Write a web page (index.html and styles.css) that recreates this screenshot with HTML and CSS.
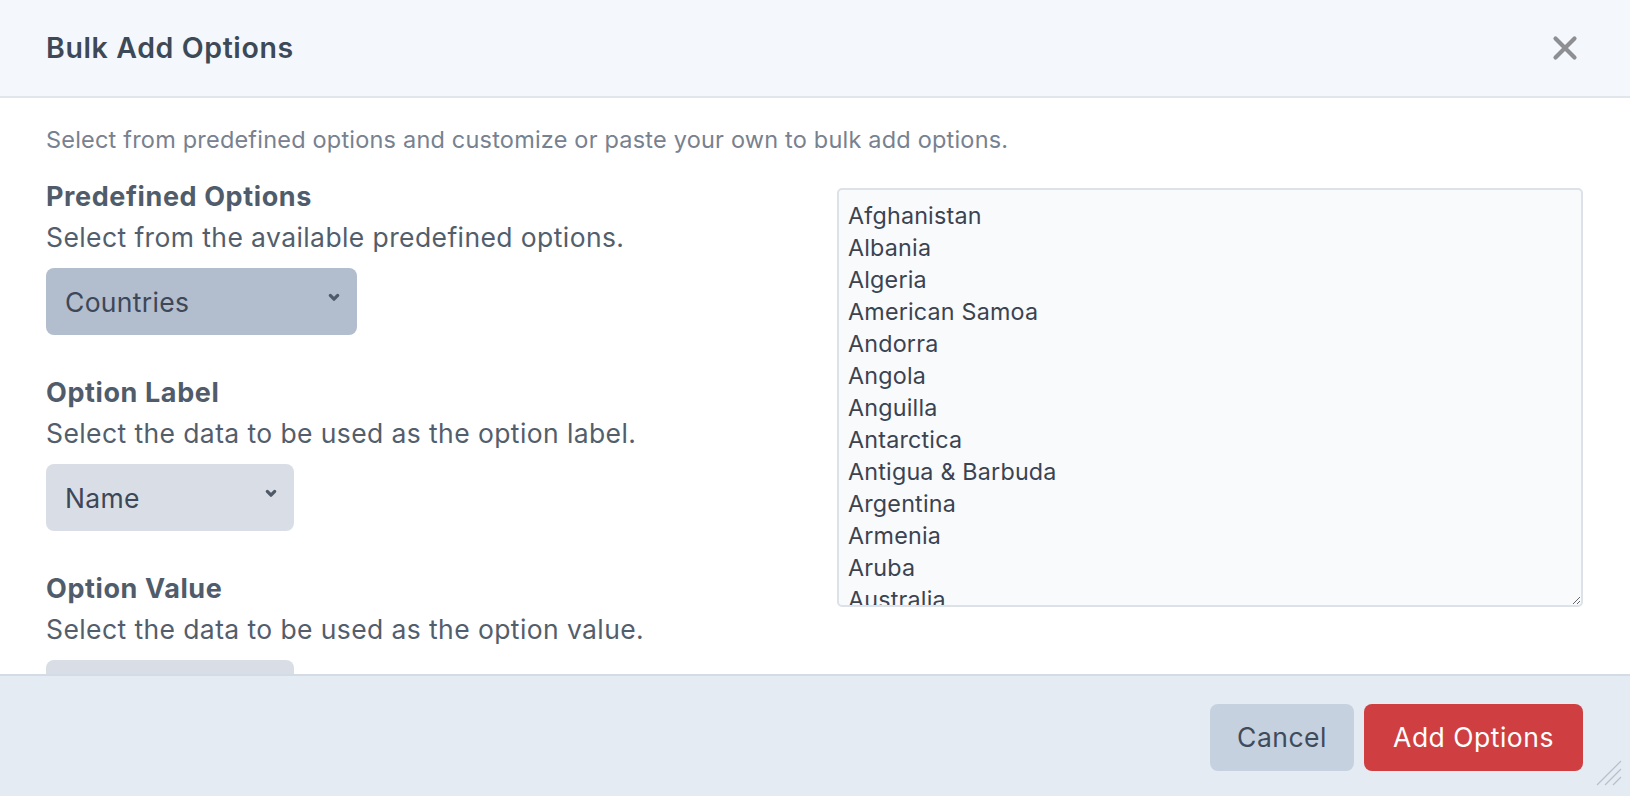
FILE: index.html
```html
<!DOCTYPE html>
<html lang="en">
<head>
<meta charset="utf-8">
<title>Bulk Add Options</title>
<link rel="stylesheet" href="styles.css">
</head>
<body>
<div class="modal">
  <header class="modal-header">
    <h2 class="modal-title">Bulk Add Options</h2>
    <button class="close-btn" type="button" aria-label="Close">
      <svg width="26" height="26" viewBox="0 0 26 26"><path d="M3.5 3.5 L22.5 22.5 M22.5 3.5 L3.5 22.5" stroke="currentColor" stroke-width="4.2" stroke-linecap="round" fill="none"/></svg>
    </button>
  </header>

  <div class="modal-body">
    <p class="intro">Select from predefined options and customize or paste your own to bulk add options.</p>
    <div class="columns">
      <div class="fields">
        <div class="field">
          <label class="field-label">Predefined Options</label>
          <p class="field-help">Select from the available predefined options.</p>
          <div class="select-wrap select-wide">
            <select class="select select-active"><option>Countries</option></select>
            <svg class="chevron" width="12" height="9" viewBox="0 0 12 9"><path d="M2.3 2.4 L6 6.2 L9.7 2.4" stroke="currentColor" stroke-width="3.2" stroke-linecap="round" stroke-linejoin="round" fill="none"/></svg>
          </div>
        </div>
        <div class="field">
          <label class="field-label">Option Label</label>
          <p class="field-help">Select the data to be used as the option label.</p>
          <div class="select-wrap">
            <select class="select"><option>Name</option></select>
            <svg class="chevron" width="12" height="9" viewBox="0 0 12 9"><path d="M2.3 2.4 L6 6.2 L9.7 2.4" stroke="currentColor" stroke-width="3.2" stroke-linecap="round" stroke-linejoin="round" fill="none"/></svg>
          </div>
        </div>
        <div class="field">
          <label class="field-label">Option Value</label>
          <p class="field-help">Select the data to be used as the option value.</p>
          <div class="select-wrap">
            <select class="select"><option>Name</option></select>
            <svg class="chevron" width="12" height="9" viewBox="0 0 12 9"><path d="M2.3 2.4 L6 6.2 L9.7 2.4" stroke="currentColor" stroke-width="3.2" stroke-linecap="round" stroke-linejoin="round" fill="none"/></svg>
          </div>
        </div>
      </div>
      <div class="preview">
        <textarea class="options-text" spellcheck="false">Afghanistan
Albania
Algeria
American Samoa
Andorra
Angola
Anguilla
Antarctica
Antigua &amp; Barbuda
Argentina
Armenia
Aruba
Australia
Austria
Azerbaijan
Bahamas
Bahrain
Bangladesh
Barbados
Belarus
Belgium
Belize
Benin
Bermuda
Bhutan
Bolivia</textarea>
      </div>
    </div>
  </div>

  <footer class="modal-footer">
    <button class="btn btn-cancel" type="button">Cancel</button>
    <button class="btn btn-primary" type="button">Add Options</button>
    <svg class="grip" width="26" height="26" viewBox="0 0 26 26"><path d="M1 25 L25 1 M9 25 L25 9 M17 25 L25 17" stroke="#b9c0ca" stroke-width="1.3" fill="none"/></svg>
  </footer>
</div>
</body>
</html>
```
FILE: styles.css
```css
* { box-sizing: border-box; }

html, body {
  margin: 0;
  height: 100%;
}

body {
  font-family: Inter, "Noto Sans", "Liberation Sans", sans-serif;
  color: #4a5568;
  background: #ffffff;
  overflow: hidden;
}

.modal {
  position: relative;
  display: flex;
  flex-direction: column;
  height: 796px;
  background: #ffffff;
}

/* Header */
.modal-header {
  flex: 0 0 auto;
  height: 98px;
  display: flex;
  align-items: center;
  justify-content: space-between;
  padding: 0 52px 0 46px;
  background: #f4f7fb;
  border-bottom: 2px solid #e1e6ed;
}

.modal-title {
  margin: 0;
  font-size: 28.5px;
  font-weight: 600;
  letter-spacing: 0.62px;
  color: #3e4958;
  line-height: 36px;
}

.close-btn {
  border: 0;
  padding: 0;
  background: transparent;
  color: #8d8f93;
  width: 26px;
  height: 26px;
  display: flex;
}

/* Body */
.modal-body {
  flex: 1 1 auto;
  overflow: hidden;
  padding: 24px 47px 0 46px;
}

.intro {
  margin: 0;
  font-size: 23.5px;
  line-height: 36px;
  letter-spacing: 0.2px;
  color: #77818f;
}

.columns {
  margin-top: 19px;
  display: grid;
  grid-template-columns: 1fr 1fr;
  column-gap: 45px;
}

.fields {
  display: flex;
  flex-direction: column;
  gap: 38px;
}

.field {
  display: flex;
  flex-direction: column;
}

.field-label {
  font-size: 27px;
  font-weight: 700;
  letter-spacing: 0.6px;
  line-height: 40px;
  color: #515c6b;
}

.field-help {
  margin: 0;
  font-size: 26.5px;
  letter-spacing: 0.4px;
  line-height: 40px;
  color: #535e6c;
}

.select-wrap {
  position: relative;
  margin-top: 11px;
  width: 248px;
  height: 67px;
}

.select-wide {
  width: 311px;
}

.select {
  appearance: none;
  -webkit-appearance: none;
  width: 100%;
  height: 100%;
  border: 0;
  border-radius: 8px;
  padding: 0 40px 0 19px;
  background: #d9dee6;
  color: #3d4757;
  font-family: inherit;
  font-size: 26.5px;
  letter-spacing: 0.3px;
  outline: none;
}

.select-active {
  background: #b2bdcd;
}

.chevron {
  position: absolute;
  right: 17px;
  top: 25px;
  color: #4f5968;
  pointer-events: none;
}

/* Preview textarea */
.preview {
  padding-top: 11px;
}

.options-text {
  display: block;
  width: 100%;
  height: 419px;
  margin: 0;
  padding: 10px 9px;
  border: 2px solid #dde1e8;
  border-radius: 5px;
  background: #f9fafc;
  color: #3b4351;
  font-family: inherit;
  font-size: 23.3px;
  letter-spacing: 0.2px;
  line-height: 32px;
  resize: both;
  overflow: hidden;
  outline: none;
}

/* Footer */
.modal-footer {
  flex: 0 0 auto;
  height: 122px;
  display: flex;
  align-items: center;
  justify-content: flex-end;
  gap: 10px;
  padding: 2px 47px 0 0;
  background: #e5ebf3;
  border-top: 2px solid #d3dbe5;
}

.btn {
  height: 67px;
  border: 0;
  border-radius: 8px;
  font-family: inherit;
  font-size: 26.5px;
  letter-spacing: 0.5px;
  font-weight: 400;
  cursor: pointer;
}

.btn-cancel {
  width: 144px;
  background: #c5d1df;
  color: #3f4b5b;
}

.btn-primary {
  width: 219px;
  background: #cf3f41;
  color: #ffffff;
}

.grip {
  position: absolute;
  right: 8px;
  bottom: 10px;
}
```
